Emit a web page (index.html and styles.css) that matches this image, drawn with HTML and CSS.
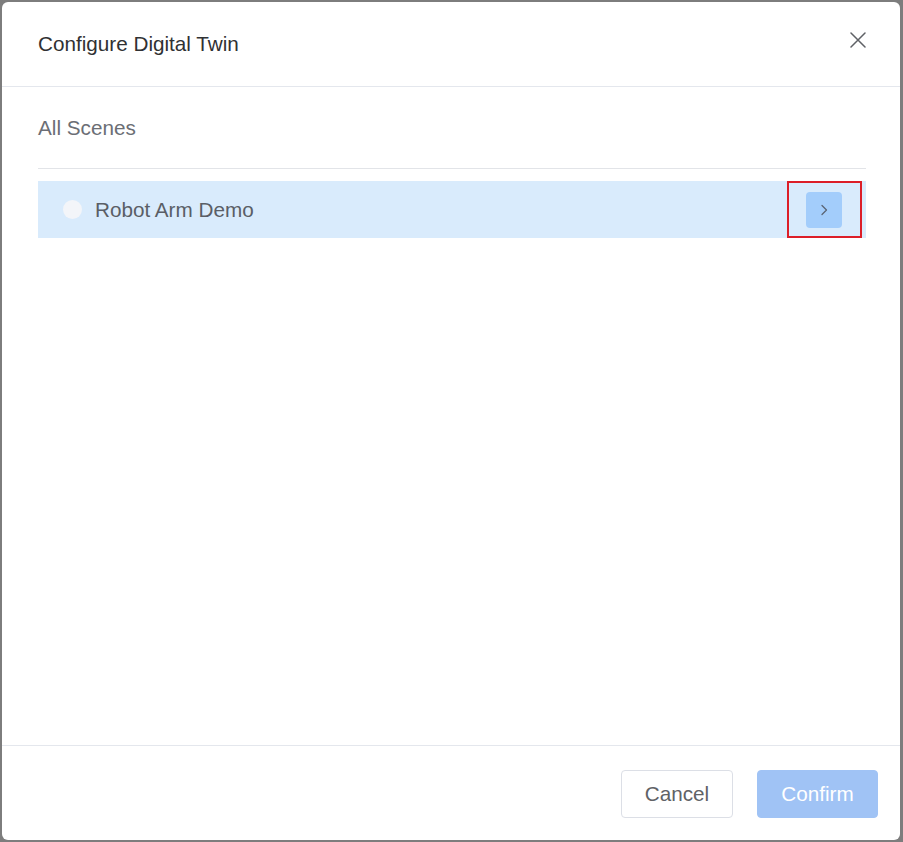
FILE: index.html
```html
<!DOCTYPE html>
<html lang="en">
<head>
<meta charset="utf-8">
<title>Configure Digital Twin</title>
<link rel="stylesheet" href="styles.css">
</head>
<body>
<div class="dialog">
  <div class="dialog-header">
    <span class="dialog-title">Configure Digital Twin</span>
    <button class="close-btn" aria-label="Close">
      <svg width="16" height="16" viewBox="0 0 16 16"><path d="M1 1 L15 15 M15 1 L1 15" stroke="#5f6166" stroke-width="1.5" fill="none" stroke-linecap="round"/></svg>
    </button>
  </div>
  <div class="dialog-body">
    <div class="section-title">All Scenes</div>
    <div class="scene-row">
      <span class="radio"></span>
      <span class="scene-name">Robot Arm Demo</span>
      <div class="highlight">
        <button class="enter-btn" aria-label="Open">
          <svg width="10" height="12" viewBox="0 0 10 12"><path d="M3 1.5 L7.5 6 L3 10.5" stroke="#5a6474" stroke-width="1.3" fill="none" stroke-linecap="round" stroke-linejoin="round"/></svg>
        </button>
      </div>
    </div>
  </div>
  <div class="dialog-footer">
    <button class="btn btn-cancel">Cancel</button>
    <button class="btn btn-confirm">Confirm</button>
  </div>
</div>
</body>
</html>
```
FILE: styles.css
```css
html, body {
  margin: 0;
  padding: 0;
  height: 100%;
}
body {
  background: #7d7d7d;
  font-family: "Liberation Sans", Arial, sans-serif;
  padding: 2px 3px 2px 2px;
  box-sizing: border-box;
  height: 842px;
  overflow: hidden;
}
.dialog {
  background: #fff;
  border-radius: 6px;
  height: 838px;
  display: flex;
  flex-direction: column;
}
.dialog-header {
  height: 85px;
  border-bottom: 1px solid #e4e7ed;
  display: flex;
  align-items: center;
  justify-content: space-between;
  padding: 0 34px 0 36px;
  box-sizing: border-box;
  flex: none;
}
.dialog-title {
  font-size: 20.7px;
  color: #303133;
  margin-top: 0;
}
.close-btn {
  border: none;
  background: none;
  padding: 0;
  width: 16px;
  height: 16px;
  margin-top: -8px;
  cursor: pointer;
  display: flex;
}
.dialog-body {
  flex: 1;
  padding: 0 34px 0 36px;
}
.section-title {
  font-size: 20.7px;
  color: #6b6e75;
  line-height: 34px;
  padding: 24px 0 23px;
  border-bottom: 1px solid #e2e4e8;
}
.scene-row {
  margin-top: 12px;
  height: 57px;
  background: #d9ebfc;
  display: flex;
  align-items: center;
  padding-left: 25px;
}
.radio {
  width: 19px;
  height: 19px;
  border-radius: 50%;
  background: #f3f5f9;
  flex: none;
}
.scene-name {
  margin-left: 13px;
  font-size: 20.7px;
  color: #5a5e66;
  flex: 1;
}
.highlight {
  width: 75px;
  height: 57px;
  box-sizing: border-box;
  border: 2px solid #dc1e28;
  margin-right: 4px;
  display: flex;
  align-items: center;
  justify-content: center;
}
.enter-btn {
  width: 36px;
  height: 36px;
  border: none;
  border-radius: 4px;
  background: #a3cdfb;
  display: flex;
  align-items: center;
  justify-content: center;
  padding: 0;
  margin-left: -1px;
}
.dialog-footer {
  border-top: 1px solid #e4e7ed;
  height: 95px;
  box-sizing: border-box;
  display: flex;
  justify-content: flex-end;
  align-items: flex-start;
  gap: 24px;
  padding: 24px 22px 0 0;
  flex: none;
}
.btn {
  height: 48px;
  border-radius: 4px;
  font-family: "Liberation Sans", Arial, sans-serif;
  font-size: 20.7px;
  padding: 0;
}
.btn-cancel {
  width: 112px;
  background: #fff;
  border: 1px solid #dcdfe6;
  color: #606266;
}
.btn-confirm {
  width: 121px;
  background: #a0c3f5;
  border: 1px solid #a0c3f5;
  color: #fff;
}
```
